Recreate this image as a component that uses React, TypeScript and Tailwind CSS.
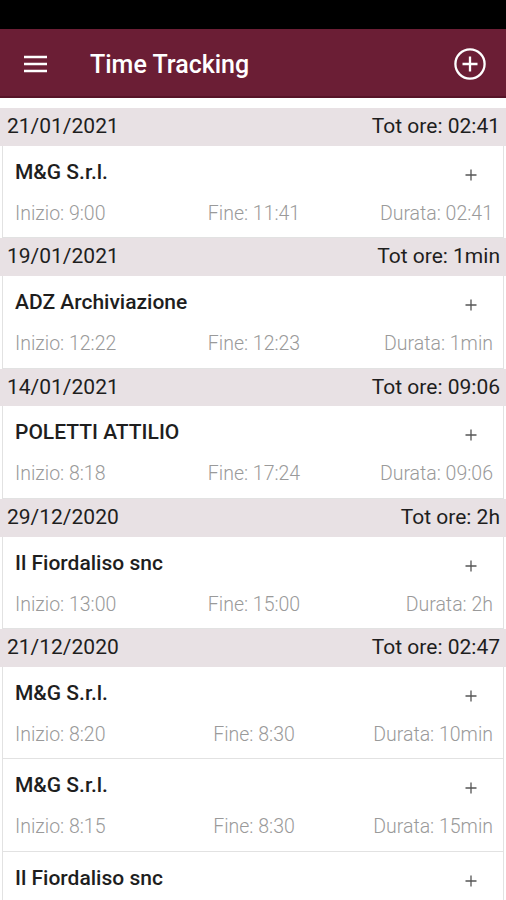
import React from "react";

type Entry = { name: string; start: string; end: string; dur: string };
type Group = { date: string; tot: string; entries: Entry[] };

const groups: Group[] = [
  { date: "21/01/2021", tot: "Tot ore: 02:41", entries: [{ name: "M&G S.r.l.", start: "Inizio: 9:00", end: "Fine: 11:41", dur: "Durata: 02:41" }] },
  { date: "19/01/2021", tot: "Tot ore: 1min", entries: [{ name: "ADZ Archiviazione", start: "Inizio: 12:22", end: "Fine: 12:23", dur: "Durata: 1min" }] },
  { date: "14/01/2021", tot: "Tot ore: 09:06", entries: [{ name: "POLETTI ATTILIO", start: "Inizio: 8:18", end: "Fine: 17:24", dur: "Durata: 09:06" }] },
  { date: "29/12/2020", tot: "Tot ore: 2h", entries: [{ name: "Il Fiordaliso snc", start: "Inizio: 13:00", end: "Fine: 15:00", dur: "Durata: 2h" }] },
  {
    date: "21/12/2020",
    tot: "Tot ore: 02:47",
    entries: [
      { name: "M&G S.r.l.", start: "Inizio: 8:20", end: "Fine: 8:30", dur: "Durata: 10min" },
      { name: "M&G S.r.l.", start: "Inizio: 8:15", end: "Fine: 8:30", dur: "Durata: 15min" },
      { name: "Il Fiordaliso snc", start: "Inizio: 13:00", end: "Fine: 15:00", dur: "Durata: 2h" },
    ],
  },
];

function Plus() {
  return (
    <svg width="14" height="14" viewBox="0 0 14 14" className="shrink-0">
      <path d="M7 1.5V12.5M1.5 7H12.5" stroke="#555" strokeWidth="1.3" />
    </svg>
  );
}

function Card({ e }: { e: Entry }) {
  return (
    <div className="mx-[2px] h-[92.6px] bg-white border-x border-b border-[#e2e2e2] flex flex-col shrink-0">
      <div className="flex items-center justify-between pl-[12px] pr-[25px] pt-[13px] h-[39px]">
        <span className="text-[21px] leading-[26px] font-medium text-[#1e1e1e]">{e.name}</span>
        <span className="mt-[6px]"><Plus /></span>
      </div>
      <div className="grid grid-cols-3 pl-[12px] pr-[10px] mt-[16px] text-[19.5px] leading-[25px] font-light text-[#9a9a9a]">
        <span className="whitespace-nowrap">{e.start}</span>
        <span className="text-center whitespace-nowrap">{e.end}</span>
        <span className="text-right whitespace-nowrap">{e.dur}</span>
      </div>
    </div>
  );
}

export default function App() {
  return (
    <div className="w-[506px] h-[900px] overflow-hidden bg-white flex flex-col" style={{ fontFamily: "Roboto, 'Noto Sans', sans-serif" }}>
      <div className="h-[29px] bg-black shrink-0" />
      <div className="h-[69px] bg-[#6b1e35] border-b-2 border-[#571428] flex items-center pt-[3px] shrink-0">
        <svg width="23" height="18" viewBox="0 0 23 18" className="ml-[24px]">
          <path d="M0 2H23M0 9H23M0 16H23" stroke="white" strokeWidth="2.6" />
        </svg>
        <span className="ml-[43px] text-white text-[25px] font-medium leading-none">Time Tracking</span>
        <div className="flex-1" />
        <svg width="34" height="34" viewBox="0 0 34 34" className="mr-[19px]">
          <circle cx="17" cy="17" r="14.6" fill="none" stroke="white" strokeWidth="2.3" />
          <path d="M17 9.5V24.5M9.5 17H24.5" stroke="white" strokeWidth="2.3" />
        </svg>
      </div>
      <div className="h-[10px] shrink-0 bg-white" />
      {groups.map((g) => (
        <div key={g.date} className="flex flex-col shrink-0">
          <div className="h-[37.7px] bg-[#e8e1e4] flex items-center justify-between pl-[7px] pr-[6px] text-[21px] text-[#1e1e1e] shrink-0">
            <span>{g.date}</span>
            <span>{g.tot}</span>
          </div>
          {g.entries.map((e, i) => (
            <Card key={i} e={e} />
          ))}
        </div>
      ))}
    </div>
  );
}
